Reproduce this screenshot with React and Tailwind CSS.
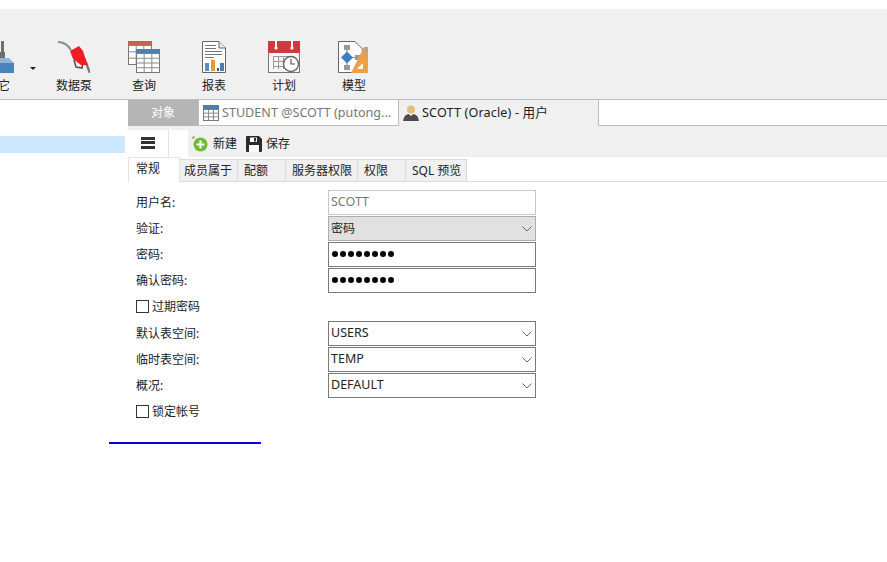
const font = { fontFamily: '"Noto Sans", "Noto Sans CJK SC", sans-serif' };

const TableGrid = ({ x, y, w, h, head, cols, rows, headH = 4 }) => {
  const lines = [];
  for (let i = 1; i < cols; i++) {
    const lx = x + (w * i) / cols;
    lines.push(<line key={"c" + i} x1={lx} y1={y} x2={lx} y2={y + h} stroke="#8a8a8a" />);
  }
  for (let i = 0; i < rows; i++) {
    const ly = y + headH + ((h - headH) * i) / rows;
    lines.push(<line key={"r" + i} x1={x} y1={ly} x2={x + w} y2={ly} stroke="#8a8a8a" />);
  }
  return (
    <g>
      <rect x={x} y={y} width={w} height={h} fill="#fff" stroke="#777" />
      {lines}
      <rect x={x} y={y} width={w} height={headH} fill={head} />
    </g>
  );
};

const OtherIcon = () => (
  <svg width="14" height="32" viewBox="0 0 14 32" className="shrink-0">
    <rect x="1" y="0" width="3" height="11" fill="#6f6f6f" />
    <rect x="0" y="11" width="5" height="6" fill="#6f6f6f" />
    <path d="M-1 17 H9 L14 22 H-1 Z" fill="#8fb4d8" />
    <rect x="-1" y="22" width="15" height="10" fill="#4a82bd" />
  </svg>
);

const PumpIcon = () => (
  <svg width="32" height="32" viewBox="0 0 32 32">
    <path d="M0 1 Q8 1 13 9" fill="none" stroke="#8c8c8c" strokeWidth="2" />
    <path d="M16 19 L18 26 L24 27 L25 22" fill="none" stroke="#555" strokeWidth="1.6" />
    <path d="M28 22 L32 32" stroke="#777" strokeWidth="2.4" />
    <path d="M12 10 L21 5 L25 10 L27 16 L30 24 L23 24 L19 21 L15 18 Z" fill="#ee1c25" />
  </svg>
);

const QueryIcon = () => (
  <svg width="32" height="32" viewBox="0 0 32 32">
    <TableGrid x={0.5} y={0.5} w={23} h={23} head="#c9634b" cols={3} rows={3} />
    <TableGrid x={8.5} y={8.5} w={23} h={23} head="#4a7fb0" cols={3} rows={4} />
  </svg>
);

const ReportIcon = () => (
  <svg width="24" height="32" viewBox="0 0 24 32">
    <path d="M0.5 0.5 H17 L23.5 7 V31.5 H0.5 Z" fill="#fff" stroke="#666" />
    <path d="M17 0.5 V7 H23.5" fill="#e8e8e8" stroke="#666" />
    <path d="M3 4.5 H14 M3 7.5 H14 M3 10.5 H20 M3 13.5 H20 M3 16.5 H12" stroke="#777" />
    <rect x="3" y="22" width="4" height="8" fill="#5b8fc0" />
    <rect x="9" y="19" width="4" height="11" fill="#e8963c" />
    <rect x="15" y="27" width="2" height="3" fill="#555" />
    <rect x="18" y="22" width="4" height="8" fill="#4a7fb0" />
  </svg>
);

const PlanIcon = () => (
  <svg width="32" height="32" viewBox="0 0 32 32">
    <rect x="0.5" y="0.5" width="31" height="31" fill="#f6f6f6" stroke="#777" />
    <rect x="0" y="0" width="32" height="12" fill="#cf3a3a" />
    <rect x="7" y="0" width="2" height="7" fill="#fff" />
    <rect x="23" y="0" width="2" height="7" fill="#fff" />
    <circle cx="8" cy="7" r="1.6" fill="#fff" />
    <circle cx="24" cy="7" r="1.6" fill="#fff" />
    <path d="M5 15.5 H24 M5 20.5 H24 M5 25.5 H24 M5.5 15 V28 M10.5 15 V28 M15.5 15 V28 M20.5 15 V28" stroke="#999" />
    <circle cx="23" cy="23" r="7.5" fill="#fff" stroke="#666" strokeWidth="1.4" />
    <path d="M23 18 V23 H27" fill="none" stroke="#555" strokeWidth="1.2" />
  </svg>
);

const ModelIcon = () => (
  <svg width="32" height="32" viewBox="0 0 32 32">
    <path d="M0.5 0.5 H17 L24.5 8 V31.5 H0.5 Z" fill="#fff" stroke="#666" />
    <rect x="6" y="4" width="6" height="5" fill="#999" />
    <rect x="6" y="24" width="6" height="5" fill="#999" />
    <rect x="17" y="14" width="5" height="5" fill="#999" />
    <path d="M9 9 V24 M12 16.5 H17" stroke="#888" />
    <path d="M9 10.5 L15 16.5 L9 22.5 L3 16.5 Z" fill="#3d7fc4" />
    <path d="M26 6 H30 V32 H13 Z" fill="#f0a044" />
    <path d="M26 6 H30 V15 H26 Z" fill="#c9a27a" />
    <path d="M25 22 V28 H19 Z" fill="#fff" />
  </svg>
);

const SmallTableIcon = () => (
  <svg width="16" height="16" viewBox="0 0 16 16" className="shrink-0">
    <TableGrid x={0.5} y={0.5} w={15} h={15} head="#4a7fb0" cols={3} rows={3} />
  </svg>
);

const UserIcon = () => (
  <svg width="16" height="16" viewBox="0 0 16 16" className="shrink-0">
    <circle cx="8" cy="4.5" r="4" fill="#e3bd7c" />
    <path d="M0 16 Q1 9.5 5.5 9 L8 11 L10.5 9 Q15 9.5 16 16 Z" fill="#4d4d4d" />
  </svg>
);

const NewIcon = () => (
  <svg width="17" height="17" viewBox="0 0 17 17" className="shrink-0">
    <circle cx="2.5" cy="2.5" r="1.5" fill="#b9b08a" />
    <circle cx="9.5" cy="9.5" r="7" fill="#6cbb2c" />
    <path d="M9.5 5.5 V13.5 M5.5 9.5 H13.5" stroke="#fff" strokeWidth="2.2" />
  </svg>
);

const SaveIcon = () => (
  <svg width="16" height="16" viewBox="0 0 16 16" className="shrink-0">
    <path d="M0 1 Q0 0 1 0 H13 L16 3 V15 Q16 16 15 16 H1 Q0 16 0 15 Z" fill="#2b2b2b" />
    <rect x="4" y="1.5" width="7" height="4.5" fill="#fff" />
    <rect x="8" y="2" width="2" height="3.5" fill="#2b2b2b" />
    <rect x="3" y="9" width="10" height="7" fill="#fff" />
  </svg>
);

const Chevron = () => (
  <svg width="10" height="6" viewBox="0 0 10 6" className="absolute right-[3.5px] top-[9px]">
    <path d="M0.5 0.5 L5 5 L9.5 0.5" fill="none" stroke="#666" />
  </svg>
);

const ToolItem = ({ label, children }) => (
  <div className="w-[70px] flex flex-col items-center">
    <div className="h-[32px] flex items-center justify-center">{children}</div>
    <div className="mt-[3px] text-[12px] leading-[20px] text-[#222]">{label}</div>
  </div>
);

const Row = ({ label, children }) => (
  <div className="h-[26px] flex">
    <div className="w-[192px] pt-[4px] text-[12px] leading-[18px] text-[#222]">{label}</div>
    {children}
  </div>
);

const Check = ({ label }) => (
  <div className="h-[26px] flex items-center gap-[3px] pb-[1px]">
    <span className="w-[13px] h-[13px] border border-[#333] bg-white" />
    <span className="text-[12px] text-[#222]">{label}</span>
  </div>
);

const Field = ({ className, children }) => (
  <div className={"relative w-[208px] h-[25px] pl-[2px] border text-[12.5px] leading-[22px] " + className}>
    {children}
  </div>
);

const Dots = () => (
  <div className="flex items-center gap-[2px] h-full pl-[1px] pb-[2px]">
    {[0, 1, 2, 3, 4, 5, 6, 7].map((i) => (
      <span key={i} className="w-[6px] h-[6px] rounded-full bg-black" />
    ))}
  </div>
);

const subTabs = [
  ["成员属于", "w-[58px] pl-[4px]"],
  ["配额", "w-[48px] pl-[6px]"],
  ["服务器权限", "w-[72px] pl-[6px]"],
  ["权限", "w-[48px] pl-[6px]"],
  ["SQL 预览", "w-[61px] pl-[6px]"],
];

export default function App() {
  return (
    <div style={font} className="relative w-[887px] h-[562px] overflow-hidden bg-white">
      <div className="h-[9px]" />

      {/* main toolbar */}
      <div className="h-[91px] pt-[32px] flex items-start bg-[#f0f0f0] border-b border-[#bdbdbd]">
        <div className="w-[39px] flex items-start shrink-0">
          <div className="w-[14px] flex flex-col items-end">
            <OtherIcon />
            <div className="mt-[3px] mr-[4px] text-[12px] leading-[20px] text-[#222] whitespace-nowrap">其它</div>
          </div>
          <svg width="6" height="3" viewBox="0 0 6 3" className="ml-[16px] mt-[26px] shrink-0">
            <path d="M0 0 H6 L3 3 Z" fill="#222" />
          </svg>
        </div>
        <ToolItem label="数据泵"><PumpIcon /></ToolItem>
        <ToolItem label="查询"><QueryIcon /></ToolItem>
        <ToolItem label="报表"><ReportIcon /></ToolItem>
        <ToolItem label="计划"><PlanIcon /></ToolItem>
        <ToolItem label="模型"><ModelIcon /></ToolItem>
      </div>

      <div className="flex">
        {/* sidebar */}
        <div className="w-[128px] pt-[36px] shrink-0">
          <div className="w-[125px] h-[17px] bg-[#cce8ff]" />
        </div>

        {/* content */}
        <div className="flex-1">
          <div className="h-[26px] flex text-[12.6px]">
            <div className="w-[70px] bg-[#b5b5b5] text-[12px] text-white flex items-center justify-center">对象</div>
            <div className="w-[200px] pl-[4px] flex items-center gap-[3px] bg-white border-b border-l border-[#bdbdbd] text-[#777] whitespace-nowrap">
              <SmallTableIcon />
              <span className="pt-[1px]">STUDENT @SCOTT (putong...</span>
            </div>
            <div className="w-[201px] pl-[4px] flex items-center gap-[3px] bg-[#f0f0f0] border-l border-r border-[#bdbdbd] text-[#222] whitespace-nowrap">
              <UserIcon />
              <span className="tracking-[0.15px]">SCOTT (Oracle) - 用户</span>
            </div>
            <div className="flex-1 border-b border-[#bdbdbd]" />
          </div>

          <div className="h-[31px] pt-[4px] flex bg-[#f0f0f0] text-[12px] text-[#222]">
            <div className="w-[60px] flex bg-white">
              <div className="w-[41px] flex items-center justify-center border-r border-[#e4e4e4]">
                <div className="w-[14px] h-[12px] mb-[2px] flex flex-col justify-between">
                  <span className="h-[3px] bg-[#333]" />
                  <span className="h-[3px] bg-[#333]" />
                  <span className="h-[3px] bg-[#333]" />
                </div>
              </div>
            </div>
            <div className="ml-[5px] flex items-center gap-[3px] -translate-x-[2px]">
              <NewIcon />
              <span className="translate-x-[2px]">新建</span>
            </div>
            <div className="ml-[9px] flex items-center gap-[4px]">
              <SaveIcon />
              保存
            </div>
          </div>

          <div className="h-[25px] flex items-end border-b border-[#dcdcdc] text-[12px] text-[#222]">
            <div className="w-[52px] h-[25px] pl-[7px] pt-[2px] bg-white border-t border-l border-r border-[#e4e4e4] -mb-px">常规</div>
            {subTabs.map(([name, w]) => (
              <div key={name} className={w + " h-[22px] flex items-center bg-[#f0f0f0] border-r border-t border-[#dcdcdc] whitespace-nowrap"}>
                {name}
              </div>
            ))}
          </div>

          {/* form */}
          <div className="pt-[8px] pl-[8px]">
            <Row label="用户名:">
              <Field className="border-[#c8c8c8] text-[#777]">SCOTT</Field>
            </Row>
            <Row label="验证:">
              <Field className="border-[#adadad] bg-[#e1e1e1] text-[#222]"><span className="block pt-[1px] text-[12px]">密码</span><Chevron /></Field>
            </Row>
            <Row label="密码:">
              <Field className="border-[#7a7a7a]"><Dots /></Field>
            </Row>
            <Row label="确认密码:">
              <Field className="border-[#7a7a7a]"><Dots /></Field>
            </Row>
            <div className="h-[27px]"><Check label="过期密码" /></div>
            <Row label="默认表空间:">
              <Field className="border-[#7a7a7a] text-[#222]">USERS<Chevron /></Field>
            </Row>
            <Row label="临时表空间:">
              <Field className="border-[#7a7a7a] text-[#222]">TEMP<Chevron /></Field>
            </Row>
            <Row label="概况:">
              <Field className="border-[#7a7a7a] text-[#222]">DEFAULT<Chevron /></Field>
            </Row>
            <Check label="锁定帐号" />
          </div>
        </div>
      </div>

      {/* stray blue underline */}
      <div className="absolute left-[109px] top-[442px] w-[152px] h-[2px] bg-[#0000e0]" />
    </div>
  );
}
